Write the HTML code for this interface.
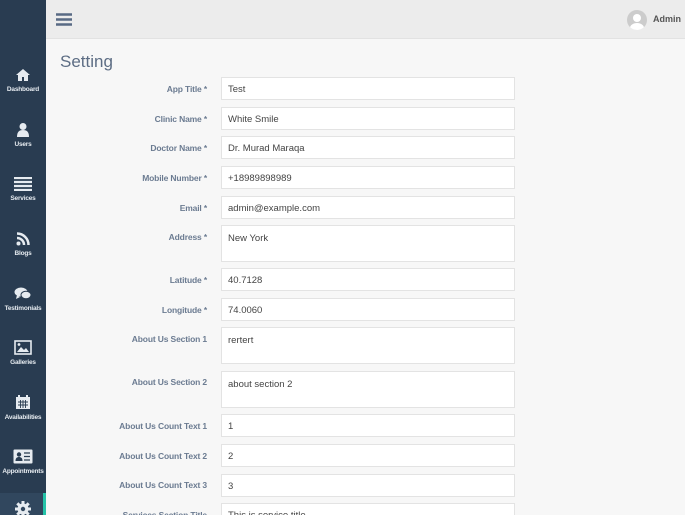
<!DOCTYPE html>
<html style="overflow:hidden;height:515px"><head><meta charset="utf-8"><style>
*{box-sizing:border-box;margin:0;padding:0}
body{width:685px;height:515px;overflow:hidden;background:#f7f7f7;font-family:"Liberation Sans",sans-serif;position:relative}
.side{position:absolute;left:0;top:0;width:46px;height:515px;background:#293c51}
.top{position:absolute;left:46px;top:0;right:0;height:39px;background:#ececec;border-bottom:1px solid #e2e2e2}
.item{position:absolute;left:0;width:46px;text-align:center;color:#e6ebf0;font-size:6.5px;font-weight:bold;letter-spacing:-0.2px}
.item svg{display:block;margin:0 auto 4px}
.lbl{position:absolute;right:478px;font-size:8.5px;font-weight:bold;color:#6b7b91;text-align:right;white-space:nowrap;letter-spacing:-0.15px}
.in{position:absolute;left:221px;width:294px;height:23px;background:#fff;border:1.5px solid #e3e3e3;font-size:9.5px;color:#444;padding:6px 0 0 6px;overflow:hidden}
.ta{height:37px;padding-top:7px}
h1{position:absolute;left:60px;top:52px;font-size:17px;font-weight:normal;color:#5d6d84}
</style></head><body>
<div class="side">
<div class="item" style="top:68px"><svg width="16" height="14" viewBox="0 0 16 14"><path d="M8 1L1 7h2v6h4V9h2v4h4V7h2z" fill="#e6ebf0"/></svg>Dashboard</div>
<div class="item" style="top:122px"><svg width="14" height="15" viewBox="0 0 14 15"><circle cx="7" cy="4.5" r="3.5" fill="#e6ebf0"/><path d="M1 15c0-5 2-7 6-7s6 2 6 7z" fill="#e6ebf0"/></svg>Users</div>
<div class="item" style="top:177px"><svg width="18" height="14" viewBox="0 0 18 14"><path d="M0 1h18M0 5h18M0 9h18M0 13h18" stroke="#e6ebf0" stroke-width="2.2"/></svg>Services</div>
<div class="item" style="top:232px"><svg width="14" height="14" viewBox="0 0 14 14"><circle cx="2.5" cy="11.5" r="2" fill="#e6ebf0"/><path d="M1 6a7 7 0 0 1 7 7M1 1.5a11.5 11.5 0 0 1 11.5 11.5" stroke="#e6ebf0" stroke-width="2.5" fill="none"/></svg>Blogs</div>
<div class="item" style="top:286px"><svg width="18" height="15" viewBox="0 0 18 15"><ellipse cx="7" cy="6" rx="6.5" ry="4.5" fill="#e6ebf0"/><ellipse cx="12" cy="9" rx="5" ry="3.8" fill="#e6ebf0" stroke="#293c51"/><path d="M3 9l-1 4 4-2z" fill="#e6ebf0"/></svg>Testimonials</div>
<div class="item" style="top:340px"><svg width="18" height="15" viewBox="0 0 18 15"><rect x="1" y="1" width="16" height="13" fill="none" stroke="#e6ebf0" stroke-width="1.6"/><path d="M3 12l4-5 3 3 2-2 3 4z" fill="#e6ebf0"/><circle cx="5" cy="4.5" r="1.4" fill="#e6ebf0"/></svg>Galleries</div>
<div class="item" style="top:394px"><svg width="16" height="16" viewBox="0 0 16 16"><rect x="1" y="3" width="14" height="12" fill="#e6ebf0"/><path d="M4 1v4M12 1v4" stroke="#e6ebf0" stroke-width="2"/><path d="M3 8h10M3 11h10M5.5 6v8M8 6v8M10.5 6v8" stroke="#293c51" stroke-width="0.9"/></svg>Availabilities</div>
<div class="item" style="top:449px"><svg width="20" height="15" viewBox="0 0 20 15"><rect x="0.5" y="0.5" width="19" height="14" rx="1" fill="#e6ebf0"/><circle cx="6" cy="5.5" r="2.2" fill="#293c51"/><path d="M2.5 12c0-3 1.5-4 3.5-4s3.5 1 3.5 4z" fill="#293c51"/><path d="M11 4h6M11 7.5h6M11 11h6" stroke="#293c51" stroke-width="1.3"/></svg>Appointments</div>
<div style="position:absolute;left:0;top:493px;width:46px;height:22px;background:#31475e;border-right:3px solid #25c3a8"></div>
<div class="item" style="top:501px"><svg width="16" height="16" viewBox="0 0 16 16"><circle cx="8" cy="8" r="5.5" fill="#e6ebf0"/><path d="M8 0v16M0 8h16M2.3 2.3l11.4 11.4M13.7 2.3L2.3 13.7" stroke="#e6ebf0" stroke-width="3"/><circle cx="8" cy="8" r="2.2" fill="#31475e"/></svg></div>
</div>
<div class="top">
<svg style="position:absolute;left:10px;top:13px" width="16" height="13" viewBox="0 0 16 13"><path d="M0 1.5h16M0 6.5h16M0 11.5h16" stroke="#586a84" stroke-width="2.4"/></svg>
<div style="position:absolute;left:581px;top:10px;width:20px;height:20px;border-radius:50%;background:#ccc;overflow:hidden"><div style="position:absolute;left:6px;top:4px;width:8px;height:8px;border-radius:50%;background:#fff"></div><div style="position:absolute;left:3px;top:13px;width:14px;height:10px;border-radius:50%;background:#fff"></div></div>
<div style="position:absolute;left:607px;top:14px;font-size:9px;font-weight:bold;color:#555">Admin</div>
</div>
<h1>Setting</h1>
<div class="lbl" style="top:84px">App Title *</div><div class="in" style="top:77px">Test</div>
<div class="lbl" style="top:114px">Clinic Name *</div><div class="in" style="top:107px">White Smile</div>
<div class="lbl" style="top:143px">Doctor Name *</div><div class="in" style="top:136px">Dr. Murad Maraqa</div>
<div class="lbl" style="top:173px">Mobile Number *</div><div class="in" style="top:166px">+18989898989</div>
<div class="lbl" style="top:203px">Email *</div><div class="in" style="top:196px">admin@example.com</div>
<div class="lbl" style="top:232px">Address *</div><div class="in ta" style="top:225px">New York</div>
<div class="lbl" style="top:275px">Latitude *</div><div class="in" style="top:268px">40.7128</div>
<div class="lbl" style="top:305px">Longitude *</div><div class="in" style="top:298px">74.0060</div>
<div class="lbl" style="top:334px">About Us Section 1</div><div class="in ta" style="top:327px">rertert</div>
<div class="lbl" style="top:377px">About Us Section 2</div><div class="in ta" style="top:371px">about section 2</div>
<div class="lbl" style="top:421px">About Us Count Text 1</div><div class="in" style="top:414px">1</div>
<div class="lbl" style="top:451px">About Us Count Text 2</div><div class="in" style="top:444px">2</div>
<div class="lbl" style="top:480px">About Us Count Text 3</div><div class="in" style="top:474px">3</div>
<div class="lbl" style="top:510px">Services Section Title</div><div class="in" style="top:503px">This is service title</div>
</body></html>
